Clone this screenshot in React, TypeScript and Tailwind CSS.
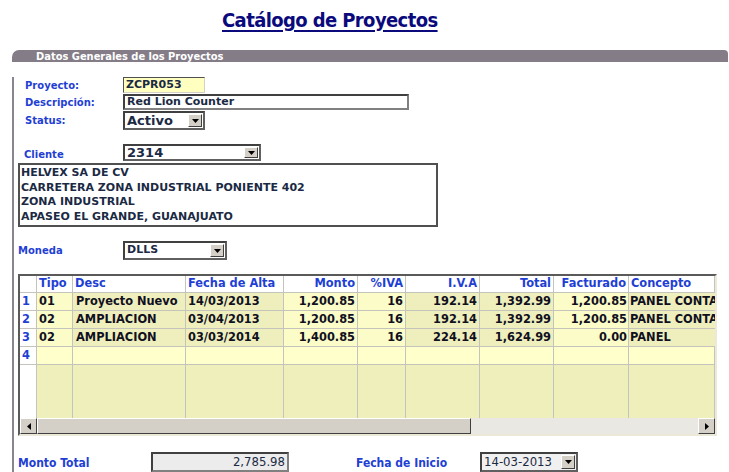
import React from "react";

const verdana = "font-['DejaVu_Sans',Verdana,sans-serif]";
const tahoma = "font-['DejaVu_Sans_Condensed',Tahoma,sans-serif]";

const rows = [
  { n: "1", tipo: "01", desc: "Proyecto Nuevo", fecha: "14/03/2013", monto: "1,200.85", piva: "16", iva: "192.14", total: "1,392.99", fact: "1,200.85", concepto: "PANEL CONTA" },
  { n: "2", tipo: "02", desc: "AMPLIACION", fecha: "03/04/2013", monto: "1,200.85", piva: "16", iva: "192.14", total: "1,392.99", fact: "1,200.85", concepto: "PANEL CONTA" },
  { n: "3", tipo: "02", desc: "AMPLIACION", fecha: "03/03/2014", monto: "1,400.85", piva: "16", iva: "224.14", total: "1,624.99", fact: "0.00", concepto: "PANEL" },
];

const light = "bg-[#fcfcc8]";
const dark = "bg-[#efefbd]";
const cell = "h-[18px] border-r border-b border-[#c4c4bc] flex items-center overflow-hidden whitespace-nowrap";

function Arrow() {
  return (
    <div className="w-[14px] self-stretch m-[1px] bg-[#d4d0c8] border border-t-white border-l-white border-b-[#404040] border-r-[#404040] flex items-center justify-center">
      <svg width="7" height="4" viewBox="0 0 7 4">
        <path d="M0 0h7L3.5 4z" fill="#000" />
      </svg>
    </div>
  );
}

function Select({ w, h, text, textCls, bg = "bg-white" }: { w: string; h: string; text: string; textCls: string; bg?: string }) {
  return (
    <div className={`${w} ${h} ${bg} flex border-2 border-t-[#404040] border-l-[#404040] border-b-[#606060] border-r-[#606060]`}>
      <div className={`flex-1 pl-[2px] flex items-center text-[#1b2a44] ${textCls}`}>{text}</div>
      <Arrow />
    </div>
  );
}

function Label({ children, cls }: { children: React.ReactNode; cls: string }) {
  return <span className={`${cls} ${verdana} text-[10px] font-bold text-[#1f3fd4] leading-none`}>{children}</span>;
}

export default function App() {
  return (
    <div className="w-[729px] h-[472px] overflow-hidden bg-white">
      {/* Title */}
      <div className="h-[50px] pt-[8px] pl-[222px]">
        <span className={`${tahoma} text-[20px] leading-[24px] font-bold text-[#0a0a7c] underline decoration-2 underline-offset-[3px] tracking-[-0.6px]`}>
          Catálogo de Proyectos
        </span>
      </div>

      {/* Panel header */}
      <div className="ml-[12px] mr-[1px] h-[12px] bg-[#847d88] rounded-tl-[7px] rounded-tr-[4px] pl-[24px] flex items-center">
        <span className={`${tahoma} text-[11px] font-bold text-white leading-none`}>Datos Generales de los Proyectos</span>
      </div>

      {/* Panel body */}
      <div className="ml-[12px] border-l-2 border-[#8a8490] pl-[4px] h-[410px]">
        <div className="mt-[15px] h-[16px] flex items-center">
          <Label cls="ml-[7px] w-[98px] pt-[2px]">Proyecto:</Label>
          <div className={`w-[82px] h-[16px] bg-[#ffffc0] border border-t-[#505050] border-l-[#505050] border-b-[#d4d0c8] border-r-[#d4d0c8] pl-[2px] flex items-center ${verdana} text-[11px] font-bold text-[#1b2a44]`}>
            ZCPR053
          </div>
        </div>
        <div className="mt-[1px] h-[16px] flex items-center">
          <Label cls="ml-[7px] w-[98px] pt-[2px]">Descripción:</Label>
          <div className={`w-[286px] h-[16px] bg-white border-2 border-t-[#404040] border-l-[#404040] border-b-[#808080] border-r-[#808080] pl-[2px] flex items-center ${verdana} text-[11px] font-bold text-[#1b2a44]`}>
            Red Lion Counter
          </div>
        </div>
        <div className="mt-[1px] h-[19px] flex items-center">
          <Label cls="ml-[7px] w-[98px] pt-[1px]">Status:</Label>
          <Select w="w-[82px]" h="h-[19px]" text="Activo" textCls={`${verdana} text-[13px] font-semibold`} />
        </div>

        <div className="mt-[14px] h-[17px] flex items-center">
          <Label cls="ml-[6px] w-[99px] pt-[4px]">Cliente</Label>
          <Select w="w-[138px]" h="h-[17px]" text="2314" textCls={`${verdana} text-[13px] font-semibold`} />
        </div>
        <div className={`mt-[2px] w-[420px] h-[64px] border-2 border-[#505050] pl-[1px] pt-[1px] ${verdana} text-[11px] font-bold leading-[14.7px] text-[#1b2a44]`}>
          <div>HELVEX SA DE CV</div>
          <div>CARRETERA ZONA INDUSTRIAL PONIENTE 402</div>
          <div>ZONA INDUSTRIAL</div>
          <div>APASEO EL GRANDE, GUANAJUATO</div>
        </div>

        <div className="mt-[14px] h-[19px] flex items-center">
          <Label cls="w-[105px] pt-[1px]">Moneda</Label>
          <Select w="w-[104px]" h="h-[19px]" text="DLLS" textCls={`${verdana} text-[11px] font-bold`} />
        </div>

        {/* Grid */}
        <div className={`mt-[14px] w-[699px] h-[162px] border-2 border-t-[#5a5a5a] border-l-[#5a5a5a] border-b-[#ece9d8] border-r-[#ece9d8] flex flex-col ${verdana} text-[11.4px] font-bold`}>
          <div className="w-[695px] h-[142px] overflow-hidden">
            <div className="grid grid-cols-[17px_36px_113px_98px_74px_48px_74px_74px_75px_86px] w-[695px]">
              {/* header */}
              <div className="h-[17px] border-r border-b border-[#c4c4bc] bg-white" />
              {[
                ["Tipo", "l"], ["Desc", "l"], ["Fecha de Alta", "l"], ["Monto", "r"], ["%IVA", "r"],
                ["I.V.A", "r"], ["Total", "r"], ["Facturado", "r"], ["Concepto", "l"],
              ].map(([t, a]) => (
                <div
                  key={t}
                  className={`h-[17px] border-r border-b border-[#c4c4bc] bg-white flex items-center text-[#1f3fd4] whitespace-nowrap overflow-hidden ${a === "r" ? "justify-end pr-[2px]" : "pl-[2px]"}`}
                >
                  {t}
                </div>
              ))}

              {rows.map((r) => (
                <React.Fragment key={r.n}>
                  <div className={`${cell} bg-white pl-[2px] text-[#1f3fd4]`}>{r.n}</div>
                  <div className={`${cell} ${light} pl-[2px] text-[#10101e]`}>{r.tipo}</div>
                  <div className={`${cell} ${dark} pl-[3px] text-[#10101e]`}>{r.desc}</div>
                  <div className={`${cell} ${dark} pl-[2px] text-[#10101e]`}>{r.fecha}</div>
                  <div className={`${cell} ${light} justify-end pr-[2px] text-[#10101e]`}>{r.monto}</div>
                  <div className={`${cell} ${light} justify-end pr-[2px] text-[#10101e]`}>{r.piva}</div>
                  <div className={`${cell} ${dark} justify-end pr-[2px] text-[#10101e]`}>{r.iva}</div>
                  <div className={`${cell} ${dark} justify-end pr-[2px] text-[#10101e]`}>{r.total}</div>
                  <div className={`${cell} ${light} justify-end pr-[1px] text-[#10101e]`}>{r.fact}</div>
                  <div className={`${cell} ${dark} pl-[1px] text-[#10101e] border-r-0`}>{r.concepto}</div>
                </React.Fragment>
              ))}

              {/* new row */}
              <div className={`${cell} bg-white pl-[2px] text-[#1f3fd4]`}>4</div>
              {Array.from({ length: 9 }).map((_, i) => (
                <div key={`n${i}`} className={`${cell} bg-[#ffffcc]`} />
              ))}

              {/* empty area */}
              <div className="h-[54px] border-r border-[#c4c4bc] bg-white" />
              {Array.from({ length: 9 }).map((_, i) => (
                <div key={`e${i}`} className="h-[54px] border-r border-[#c4c4bc] bg-[#efefbb]" />
              ))}
            </div>
          </div>

          {/* horizontal scrollbar */}
          <div className="h-[16px] w-[695px] flex bg-[#eae8e3]">
            <div className="w-[17px] h-[16px] bg-[#d4d0c8] border border-t-white border-l-white border-b-[#404040] border-r-[#404040] flex items-center justify-center">
              <svg width="4" height="7" viewBox="0 0 4 7">
                <path d="M4 0v7L0 3.5z" fill="#000" />
              </svg>
            </div>
            <div className="w-[434px] h-[16px] bg-[#d4d0c8] border border-t-white border-l-white border-b-[#404040] border-r-[#404040]" />
            <div className="flex-1" />
            <div className="w-[17px] h-[16px] bg-[#d4d0c8] border border-t-white border-l-white border-b-[#404040] border-r-[#404040] flex items-center justify-center">
              <svg width="4" height="7" viewBox="0 0 4 7">
                <path d="M0 0v7L4 3.5z" fill="#000" />
              </svg>
            </div>
          </div>
        </div>

        {/* Bottom */}
        <div className="mt-[16px] h-[20px] flex items-center">
          <span className={`w-[133px] ${tahoma} text-[12px] font-bold text-[#1f3fd4] pt-[1px]`}>Monto Total</span>
          <div className={`w-[138px] h-[20px] bg-[#ececec] border-2 border-t-[#404040] border-l-[#404040] border-b-[#808080] border-r-[#808080] pr-[2px] flex items-center justify-end ${tahoma} text-[13px] text-[#1b2a44]`}>
            2,785.98
          </div>
          <span className={`ml-[67px] w-[124px] ${tahoma} text-[12px] font-bold text-[#1f3fd4] pt-[1px]`}>Fecha de Inicio</span>
          <Select w="w-[98px]" h="h-[20px]" text="14-03-2013" textCls={`${tahoma} text-[13px]`} bg="bg-[#f0f0f0]" />
        </div>
      </div>
    </div>
  );
}
